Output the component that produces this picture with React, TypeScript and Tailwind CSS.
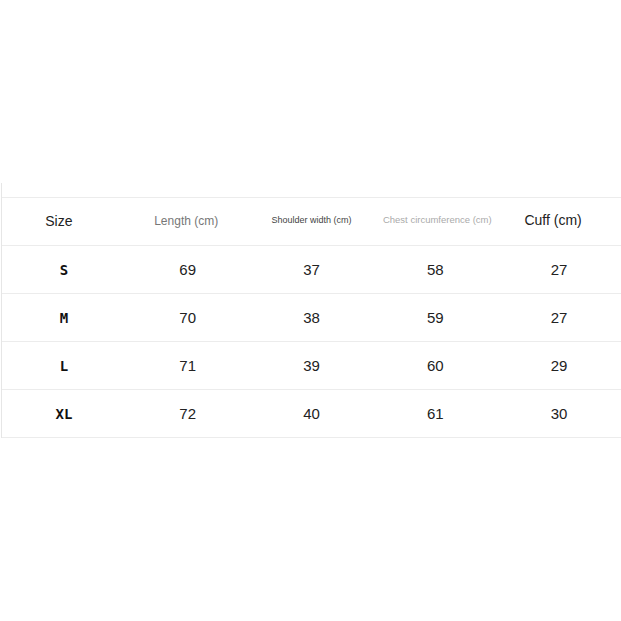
import React from "react";

const rows = [
  ["S", "69", "37", "58", "27"],
  ["M", "70", "38", "59", "27"],
  ["L", "71", "39", "60", "29"],
  ["XL", "72", "40", "61", "30"],
];

export default function App() {
  return (
    <div className="w-[621px] h-[621px] bg-white overflow-hidden" style={{ fontFamily: '"Liberation Sans", Arial, sans-serif' }}>
      <div className="pt-[183px]">
        <div className="ml-[1px] border-l border-[#e6e6e6]">
          <div className="h-[14px]" />
          <div className="flex h-[48px] border-t border-[#ececec] items-center pb-[2px]">
            <div className="w-[124px] text-center text-[14px] text-[#222] pr-[10px] pt-[2px]">Size</div>
            <div className="w-[124px] text-center text-[12px] text-[#777] pr-[3px]">Length (cm)</div>
            <div className="w-[124px] text-center text-[9px] text-[#444]">Shoulder width (cm)</div>
            <div className="w-[124px] text-center text-[9.5px] text-[#aaa] pl-[4px]">Chest circumference (cm)</div>
            <div className="w-[124px] text-center text-[14px] text-[#222] pr-[12px]">Cuff (cm)</div>
          </div>
          {rows.map((r) => (
            <div key={r[0]} className="flex h-[48px] border-t border-[#ececec] items-center pt-[2px]">
              <div className="w-[124px] text-center text-[14px] text-[#111] font-semibold" style={{ fontFamily: '"DejaVu Sans Mono", monospace' }}>
                {r[0]}
              </div>
              {r.slice(1).map((v, i) => (
                <div key={i} className="w-[124px] text-center text-[15px] text-[#222]">
                  {v}
                </div>
              ))}
            </div>
          ))}
          <div className="border-t border-[#ececec]" />
        </div>
      </div>
    </div>
  );
}
